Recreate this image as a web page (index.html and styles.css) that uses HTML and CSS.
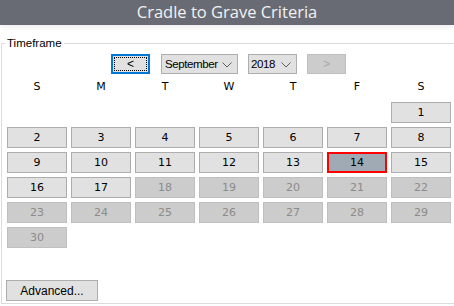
FILE: index.html
```html
<!DOCTYPE html>
<html lang="en">
<head>
  <meta charset="UTF-8">
  <meta name="viewport" content="width=device-width, initial-scale=1.0">
  <title>Cradle to Grave Criteria</title>
  <link rel="stylesheet" href="styles.css">
</head>
<body>

<header class="titlebar">Cradle to Grave Criteria</header>

<div class="group">
  <span class="legend">Timeframe</span>

  <!-- Month navigation -->
  <div class="monthnav">
    <button class="navbtn focused">&lt;</button>
    <div class="combo month">
      <span>September</span>
      <svg width="10" height="6" viewBox="0 0 10 6"><path d="M0.5 0.5 L5 5 L9.5 0.5" fill="none" stroke="#606060" stroke-width="1"/></svg>
    </div>
    <div class="combo year">
      <span>2018</span>
      <svg width="10" height="6" viewBox="0 0 10 6"><path d="M0.5 0.5 L5 5 L9.5 0.5" fill="none" stroke="#606060" stroke-width="1"/></svg>
    </div>
    <button class="navbtn" disabled>&gt;</button>
  </div>

  <!-- Weekday header -->
  <div class="weekdays">
    <span>S</span><span>M</span><span>T</span><span>W</span><span>T</span><span>F</span><span>S</span>
  </div>

  <!-- Days -->
  <div class="days">
    <span></span><span></span><span></span><span></span><span></span><span></span>
    <button class="day">1</button>
    <button class="day">2</button>
    <button class="day">3</button>
    <button class="day">4</button>
    <button class="day">5</button>
    <button class="day">6</button>
    <button class="day">7</button>
    <button class="day">8</button>
    <button class="day">9</button>
    <button class="day">10</button>
    <button class="day">11</button>
    <button class="day">12</button>
    <button class="day">13</button>
    <button class="day selected">14</button>
    <button class="day">15</button>
    <button class="day">16</button>
    <button class="day">17</button>
    <button class="day" disabled>18</button>
    <button class="day" disabled>19</button>
    <button class="day" disabled>20</button>
    <button class="day" disabled>21</button>
    <button class="day" disabled>22</button>
    <button class="day" disabled>23</button>
    <button class="day" disabled>24</button>
    <button class="day" disabled>25</button>
    <button class="day" disabled>26</button>
    <button class="day" disabled>27</button>
    <button class="day" disabled>28</button>
    <button class="day" disabled>29</button>
    <button class="day" disabled>30</button>
  </div>

  <button class="advanced">Advanced...</button>
</div>

</body>
</html>
```

FILE: styles.css
```css
body {
  margin: 0;
  padding: 0;
  font-family: "Liberation Sans", Arial, sans-serif;
  font-size: 11px;
  color: #000;
  background: #ffffff;
  overflow: hidden;
  width: 454px;
  height: 306px;
}
.titlebar {
  height: 25px;
  line-height: 24px;
  background-color: #686b74;
  color: #f2f2f2;
  text-align: center;
  font-family: "Open Sans", sans-serif;
  font-size: 16.5px;
  box-shadow: 0 2px 6px rgba(0, 0, 0, 0.08);
}
.group {
  position: relative;
  margin: 18px 0 0 1px;
  height: 261px;
  border: 1px solid #dcdcdc;
  border-right: none;
  padding: 10px 0 0 5px;
  box-sizing: border-box;
}
.legend {
  position: absolute;
  top: -7px;
  left: 3px;
  padding: 0 2px;
  background: #fff;
  font-size: 11.5px;
  line-height: 13px;
}
.monthnav {
  display: flex;
  gap: 10px;
  padding-left: 104px;
  height: 20px;
}
button {
  font-family: "DejaVu Sans", sans-serif;
  font-size: 11px;
  margin: 0;
  padding: 0;
  color: #000;
  background-color: #e1e1e1;
  border: 1px solid #adadad;
  border-radius: 0;
  box-sizing: border-box;
}
button:disabled {
  background-color: #cccccc;
  border-color: #bfbfbf;
  color: #8b8b8b;
}
.navbtn {
  width: 39px;
  height: 20px;
  font-family: "Liberation Sans", sans-serif;
  font-size: 12px;
}
.navbtn:disabled {
  color: #a8a8a8;
}
.focused {
  border: 2px solid #0078d7;
  outline: 1px dotted #000;
  outline-offset: -4px;
  margin-right: 1px;
}
.combo {
  height: 20px;
  box-sizing: border-box;
  background-color: #e1e1e1;
  border: 1px solid #adadad;
  display: flex;
  align-items: center;
  justify-content: space-between;
  padding: 0 5px 0 3px;
  font-family: "Liberation Sans", sans-serif;
  font-size: 11.5px;
  letter-spacing: -0.4px;
}
.combo svg {
  margin-top: 1px;
  flex-shrink: 0;
}
.month {
  width: 77px;
}
.year {
  width: 49px;
  padding-left: 2px;
}
.weekdays {
  display: grid;
  grid-template-columns: repeat(7, 60px);
  column-gap: 4px;
  margin-top: 4px;
  height: 18px;
  line-height: 18px;
  text-align: center;
  font-family: "DejaVu Sans", sans-serif;
  font-size: 11px;
}
.days {
  display: grid;
  grid-template-columns: repeat(7, 60px);
  grid-auto-rows: 21px;
  gap: 4px;
  margin-top: 6px;
}
.day {
  height: 21px;
}
.selected {
  background-color: #a0aab4;
  border: 2px solid #ff0000;
}
.advanced {
  margin: 32px 0 0 -1px;
  width: 92px;
  height: 21px;
  font-family: "Liberation Sans", sans-serif;
  font-size: 12px;
}
```
